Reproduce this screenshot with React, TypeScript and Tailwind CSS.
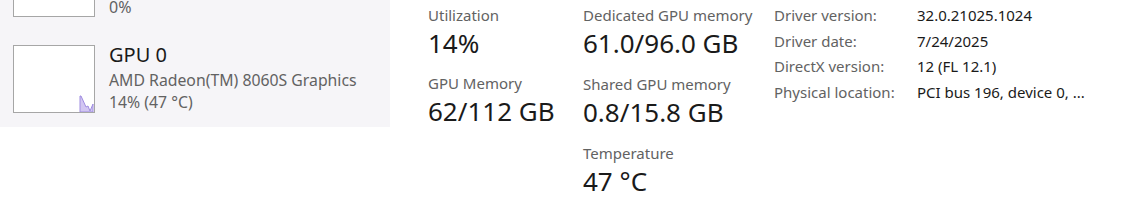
import React from "react";

const font = { fontFamily: '"Noto Sans", "Open Sans", sans-serif' };

function Graph({ spike }: { spike?: boolean }) {
  return (
    <div className="relative h-[68px] w-[82px] shrink-0 border border-[#a6a6a6] bg-white">
      {spike && (
        <svg className="absolute bottom-0 right-0" width="16" height="17" viewBox="0 0 16 17">
          <path
            d="M2 17 L2 1 L3 1 L8 12 L10 11 L12 16 L15 9 L15 17 Z"
            fill="#d2c6f2"
            stroke="#9f8ce0"
            strokeWidth="1"
            strokeLinejoin="round"
          />
        </svg>
      )}
    </div>
  );
}

function Stat({ label, value }: { label: string; value: string }) {
  return (
    <div className="flex flex-col">
      <span className="text-[15px] leading-[22px] text-[#626262]">{label}</span>
      <span className="text-[26px] leading-[34px] text-[#1a1a1a]">{value}</span>
    </div>
  );
}

const details = [
  ["Driver version:", "32.0.21025.1024"],
  ["Driver date:", "7/24/2025"],
  ["DirectX version:", "12 (FL 12.1)"],
  ["Physical location:", "PCI bus 196, device 0, ..."],
];

export default function App() {
  return (
    <div className="flex h-[204px] w-[1125px] overflow-hidden bg-white" style={font}>
      <div className="h-[127px] w-[390px] shrink-0 overflow-hidden bg-[#f6f5f8]">
        <div className="-mt-[51px] flex flex-col gap-[28px] pl-[13px]">
          <div className="flex gap-[14px]">
            <Graph />
            <div className="-mb-[1px] flex flex-col justify-end">
              <span className="text-[16px] leading-[22px] text-[#626262]">0%</span>
            </div>
          </div>
          <div className="flex gap-[14px]">
            <Graph spike />
            <div className="-mt-[2px] flex flex-col">
              <span className="text-[20px] leading-[24px] text-[#1a1a1a]">GPU 0</span>
              <span className="mt-[2px] text-[15.8px] leading-[22px] text-[#626262]">AMD Radeon(TM) 8060S Graphics</span>
              <span className="text-[15.8px] leading-[22px] text-[#626262]">14% (47 °C)</span>
            </div>
          </div>
        </div>
      </div>
      <div className="ml-[38px] flex w-[155px] shrink-0 flex-col gap-[12px] pt-[4px]">
        <Stat label="Utilization" value="14%" />
        <Stat label="GPU Memory" value="62/112 GB" />
      </div>
      <div className="flex w-[191px] shrink-0 flex-col gap-[13px] pt-[4px]">
        <Stat label="Dedicated GPU memory" value="61.0/96.0 GB" />
        <Stat label="Shared GPU memory" value="0.8/15.8 GB" />
        <Stat label="Temperature" value="47 °C" />
      </div>
      <div className="grid grid-cols-[143px_1fr] content-start pt-[3px]">
        {details.map(([k, v]) => (
          <React.Fragment key={k}>
            <span className="text-[15px] leading-[25.5px] text-[#626262]">{k}</span>
            <span className="text-[15px] leading-[25.5px] text-[#1a1a1a]">{v}</span>
          </React.Fragment>
        ))}
      </div>
    </div>
  );
}
